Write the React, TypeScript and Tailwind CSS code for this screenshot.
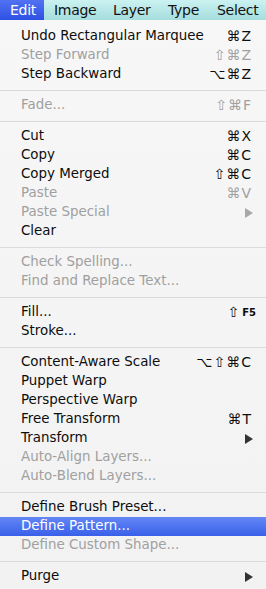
import React from "react";

type Item =
  | { sep: true }
  | { label: string; key?: string; sub?: boolean; off?: boolean; hot?: boolean; sep?: false };

// menu bar titles with their widths in the picture
const menuBar: [string, string][] = [
  ["Edit", "w-[44px]"],
  ["Image", "w-[59px]"],
  ["Layer", "w-[55px]"],
  ["Type", "w-[49px]"],
  ["Select", "w-[59px]"],
];

const items: Item[] = [
  { label: "Undo Rectangular Marquee", key: "⌘Z" },
  { label: "Step Forward", key: "⇧⌘Z", off: true },
  { label: "Step Backward", key: "⌥⌘Z" },
  { sep: true },
  { label: "Fade...", key: "⇧⌘F", off: true },
  { sep: true },
  { label: "Cut", key: "⌘X" },
  { label: "Copy", key: "⌘C" },
  { label: "Copy Merged", key: "⇧⌘C" },
  { label: "Paste", key: "⌘V", off: true },
  { label: "Paste Special", sub: true, off: true },
  { label: "Clear" },
  { sep: true },
  { label: "Check Spelling...", off: true },
  { label: "Find and Replace Text...", off: true },
  { sep: true },
  { label: "Fill...", key: "F5" },
  { label: "Stroke..." },
  { sep: true },
  { label: "Content-Aware Scale", key: "⌥⇧⌘C" },
  { label: "Puppet Warp" },
  { label: "Perspective Warp" },
  { label: "Free Transform", key: "⌘T" },
  { label: "Transform", sub: true },
  { label: "Auto-Align Layers...", off: true },
  { label: "Auto-Blend Layers...", off: true },
  { sep: true },
  { label: "Define Brush Preset..." },
  { label: "Define Pattern...", hot: true },
  { label: "Define Custom Shape...", off: true },
  { sep: true },
  { label: "Purge", sub: true },
];

function Shortcut({ k }: { k: string }) {
  // Fill uses a shift arrow plus small bold F5
  if (k === "F5") {
    return (
      <span className="flex items-center gap-[3px] mr-[-5px]">
        <span className="text-[14px]">⇧</span>
        <span className="text-[10px] font-bold">F5</span>
      </span>
    );
  }
  return <span className="text-[14px] tracking-[1px] mr-[-1px]">{k}</span>;
}

export default function App() {
  return (
    <div className="w-[266px] h-[589px] overflow-hidden bg-gradient-to-b from-[#f7f7f7] to-[#f2f2f2] font-['DejaVu_Sans',sans-serif] text-[#111]">
      <div className="h-5 flex items-center bg-gradient-to-b from-[#cbf2f1] to-[#a5dddd] text-[14px] leading-5 tracking-[-0.3px]">
        {menuBar.map(([m, w], i) => (
          <div
            key={m}
            className={
              "h-5 shrink-0 pl-[10px] " +
              w +
              (i === 0 ? " bg-gradient-to-b from-[#5272f2] to-[#2e50e3] text-white" : "")
            }
          >
            {m}
          </div>
        ))}
      </div>

      <div className="pt-[7px] text-[13.4px]">
        {items.map((it, i) =>
          it.sep ? (
            <div key={i} className="h-[12px] flex items-center">
              <div className="w-full h-px bg-[#dadada]" />
            </div>
          ) : (
            <div
              key={i}
              className={
                "h-[19px] flex items-center justify-between pl-[21px] pr-[15px] " +
                (it.hot
                  ? "bg-gradient-to-b from-[#6487f5] to-[#3a5fe9] text-white"
                  : it.off
                  ? "text-[#a0a0a0]"
                  : "text-[#0d0d0d]")
              }
            >
              <span>{it.label}</span>
              {it.key && <Shortcut k={it.key} />}
              {it.sub && (
                <svg width="8" height="10" viewBox="0 0 8 10" className="mr-[-2px]">
                  <path d="M0 0 L8 5 L0 10 Z" fill={it.off ? "#a8a8a8" : "#333"} />
                </svg>
              )}
            </div>
          )
        )}
      </div>
    </div>
  );
}
